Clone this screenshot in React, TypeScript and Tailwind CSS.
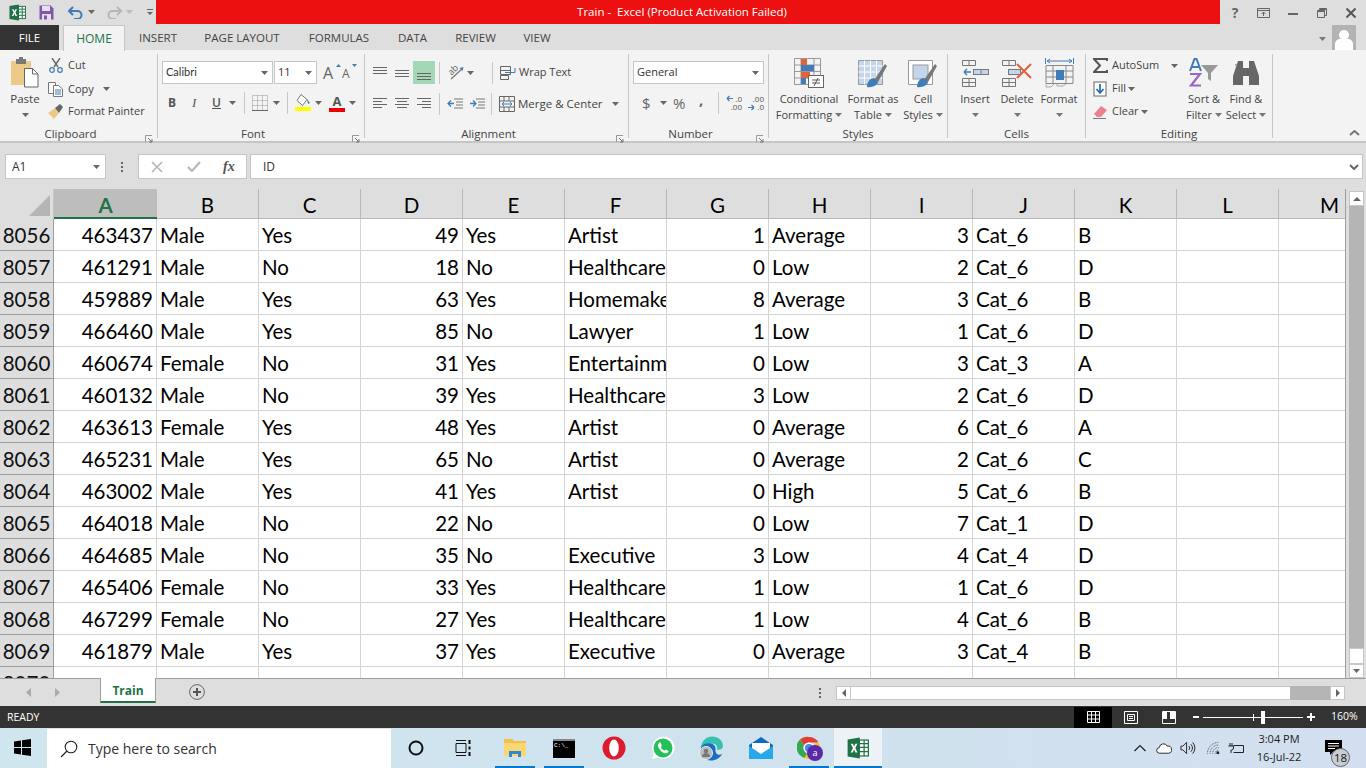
import React from "react";

const SEGOE = "[font-family:'Open_Sans','Noto_Sans',sans-serif]";

const rows: (string | number)[][] = [
  [8056, 463437, "Male", "Yes", 49, "Yes", "Artist", 1, "Average", 3, "Cat_6", "B"],
  [8057, 461291, "Male", "No", 18, "No", "Healthcare", 0, "Low", 2, "Cat_6", "D"],
  [8058, 459889, "Male", "Yes", 63, "Yes", "Homemaker", 8, "Average", 3, "Cat_6", "B"],
  [8059, 466460, "Male", "Yes", 85, "No", "Lawyer", 1, "Low", 1, "Cat_6", "D"],
  [8060, 460674, "Female", "No", 31, "Yes", "Entertainment", 0, "Low", 3, "Cat_3", "A"],
  [8061, 460132, "Male", "No", 39, "Yes", "Healthcare", 3, "Low", 2, "Cat_6", "D"],
  [8062, 463613, "Female", "Yes", 48, "Yes", "Artist", 0, "Average", 6, "Cat_6", "A"],
  [8063, 465231, "Male", "Yes", 65, "No", "Artist", 0, "Average", 2, "Cat_6", "C"],
  [8064, 463002, "Male", "Yes", 41, "Yes", "Artist", 0, "High", 5, "Cat_6", "B"],
  [8065, 464018, "Male", "No", 22, "No", "", 0, "Low", 7, "Cat_1", "D"],
  [8066, 464685, "Male", "No", 35, "No", "Executive", 3, "Low", 4, "Cat_4", "D"],
  [8067, 465406, "Female", "No", 33, "Yes", "Healthcare", 1, "Low", 1, "Cat_6", "D"],
  [8068, 467299, "Female", "No", 27, "Yes", "Healthcare", 1, "Low", 4, "Cat_6", "B"],
  [8069, 461879, "Male", "Yes", 37, "Yes", "Executive", 0, "Average", 3, "Cat_4", "B"],
];

const COLS = "A B C D E F G H I J K L M".split(" ");
const GRID = "grid grid-cols-[54px_103px_repeat(12,102px)]";

const Caret = ({ c = "#666" }: { c?: string }) => (
  <svg width="7" height="4" viewBox="0 0 7 4" className="shrink-0"><path d="M0 0h7L3.500 4z" fill={c} /></svg>
);

const Sep = () => <div className="w-px h-[22px] bg-[#c6c6c6] shrink-0" />;

const Expander = () => (
  <svg width="8" height="8" viewBox="0 0 8 8" className="absolute right-[4px] bottom-[-1px]">
    <path d="M0.500 7V0.500H7" fill="none" stroke="#999" />
    <path d="M3 3l4 4M7 4v3H4" fill="none" stroke="#777" />
  </svg>
);

const Group = ({ w, label, children, exp = true }: { w: string; label: string; children: React.ReactNode; exp?: boolean }) => (
  <div className={`${w} h-[84px] shrink-0 flex flex-col border-r border-[#c6c6c6] relative`}>
    <div className="flex-1 min-h-0">{children}</div>
    <div className={`h-[16px] mb-[-4px] leading-[16px] text-center text-[11.5px] text-[#444] relative ${exp ? "pr-[16px]" : ""}`}>
      {label}
      {exp && <Expander />}
    </div>
  </div>
);

const Lines = ({ ys, xs }: { ys: number[]; xs: [number, number][] }) => (
  <svg width="15" height="16" viewBox="0 0 15 16">
    {ys.map((y, i) => (
      <rect key={i} x={xs[i][0]} y={y} width={xs[i][1]} height="1" fill="#666" />
    ))}
  </svg>
);

const Large = ({ w, icon, lines, caretLine = true }: { w: string; icon: React.ReactNode; lines: string[]; caretLine?: boolean }) => (
  <div className={`${w} flex flex-col items-center shrink-0`}>
    <div className="h-[35px] flex items-center justify-center">{icon}</div>
    <div className="text-[11px] leading-[16px] text-[#444] whitespace-nowrap mt-[1px] text-center">
      <div>{lines[0]}</div>
      <div className="flex items-center justify-center gap-[3px] h-[16px]">
        {lines[1]}
        {caretLine && <Caret c="#777" />}
      </div>
    </div>
  </div>
);

const ExcelLogo = ({ s = 18 }: { s?: number }) => (
  <svg width={s} height={s} viewBox="0 0 18 18">
    <rect x="6" y="2.500" width="11.500" height="13" fill="#fff" stroke="#1f7246" />
    <path d="M10 2.500v13M14 2.500v13M6 5.500h11.500M6 8.500h11.500M6 12h11.500" stroke="#1f7246" />
    <path d="M0.500 2L10.500 0.500V17.500L0.500 16Z" fill="#1f7246" />
    <path d="M3 5.500h1.800l1 2.200 1-2.200h1.700L6.800 9l1.800 3.600H6.900L5.800 10.200 4.700 12.600H3L4.900 9Z" fill="#fff" />
  </svg>
);

const GridCell = ({ v, right }: { v: string | number; right: boolean }) => (
  <div className={`h-[32px] bg-white border-r border-b border-[#d4d4d4] overflow-hidden whitespace-nowrap leading-[32px] ${right ? "text-right pr-[3px]" : "text-left pl-[3px]"}`}>
    {v}
  </div>
);

const DecimalIcon = ({ more }: { more: boolean }) => (
  <div className="relative w-[16px] h-[16px] shrink-0 flex flex-col items-end text-[8px] leading-[8px] text-[#555]">
    <span>{more ? ".00" : ".0"}</span>
    <span>{more ? ".0" : ".00"}</span>
    <svg width="7" height="7" viewBox="0 0 7 7" className={`absolute left-0 ${more ? "top-[9px]" : "top-0"}`}>
      <path d={more ? "M0 3.500h6M6 3.500L3.500 1M6 3.500L3.500 6" : "M7 3.500H1M1 3.500L3.500 1M1 3.500L3.500 6"} fill="none" stroke="#3f7cb8" strokeWidth="1.200" />
    </svg>
  </div>
);

function Ribbon() {
  return (
    <div className={`h-[93px] shrink-0 bg-[#f3f3f3] border-b-2 border-[#c6c6c6] flex pt-[4px] ${SEGOE}`}>
      <Group w="w-[158px]" label="Clipboard">
        <div className="flex h-full">
          <div className="w-[50px] mr-[-2px] flex flex-col items-center pt-[3px] shrink-0">
            <svg width="30" height="32" viewBox="0 0 30 32">
              <rect x="1" y="4" width="20" height="24" fill="#edc987" />
              <rect x="6" y="2" width="10" height="5" fill="#777" />
              <rect x="9" y="0" width="4" height="3" fill="#777" />
              <path d="M14.500 11.500h8l5.500 5.500v13h-13.500z" fill="#fff" stroke="#666" />
              <path d="M22.500 11.500v5.500h5.500" fill="none" stroke="#666" />
            </svg>
            <div className="text-[11.5px] text-[#444] leading-[16px] mt-[2px]">Paste</div>
            <div className="mt-[6px]"><Caret /></div>
          </div>
          <div className="flex flex-col text-[11px] text-[#444] pt-[3px]">
            <div className="flex items-center gap-[4px] h-[17px] whitespace-nowrap">
              <svg width="16" height="15" viewBox="0 0 16 15">
                <path d="M4 0l6 9M12 0L6 9" stroke="#666" strokeWidth="1.400" fill="none" />
                <circle cx="4" cy="12" r="2.300" fill="none" stroke="#3f7cb8" strokeWidth="1.200" />
                <circle cx="12" cy="12" r="2.300" fill="none" stroke="#3f7cb8" strokeWidth="1.200" />
              </svg>
              Cut
            </div>
            <div className="flex items-center gap-[4px] h-[18px] mt-[6px] whitespace-nowrap">
              <svg width="16" height="15" viewBox="0 0 16 15">
                <path d="M.5.5h7v11h-7z" fill="#fff" stroke="#777" />
                <path d="M5.500 3.500h5l4 3.500v7.500h-9z" fill="#fff" stroke="#777" />
                <path d="M7 8h6M7 10h6M7 12h6" stroke="#3f7cb8" />
              </svg>
              Copy
              <span className="ml-[5px]"><Caret /></span>
            </div>
            <div className="flex items-center gap-[4px] h-[18px] mt-[4px] whitespace-nowrap">
              <svg width="16" height="15" viewBox="0 0 16 15">
                <path d="M0 9l7-5 4 5-5 6z" fill="#edc987" />
                <path d="M7 4l5-4 3 3-4 6z" fill="#666" />
              </svg>
              Format Painter
            </div>
          </div>
        </div>
      </Group>

      <Group w="w-[207px]" label="Font">
        <div className="pt-[7px] pl-[4px]">
          <div className="flex h-[23px] items-stretch">
            <div className="w-[111px] bg-white border border-[#c6c6c6] flex items-center justify-between pl-[3px] pr-[4px] text-[11px] text-[#333] [font-family:'Lato',sans-serif]">
              Calibri <Caret />
            </div>
            <div className="w-[43px] ml-[1px] bg-white border border-[#c6c6c6] flex items-center justify-between pl-[3px] pr-[4px] text-[11px] text-[#333]">
              11 <Caret />
            </div>
            <div className="flex items-center ml-[6px] gap-[5px] text-[#666]">
              <div className="relative text-[16px] leading-none w-[14px]">A<svg width="5" height="3" className="absolute right-[-4px] top-[-1px]"><path d="M0 3h5L2.500 0z" fill="#3f7cb8" /></svg></div>
              <div className="relative text-[12px] leading-none w-[14px] pt-[3px]">A<svg width="5" height="3" className="absolute right-[-1px] top-[-1px]"><path d="M0 0h5L2.500 3z" fill="#3f7cb8" /></svg></div>
            </div>
          </div>
          <div className="flex items-center h-[22px] mt-[8px] text-[#555] pl-[6px]">
            <span className="w-[24px] font-bold text-[12px]">B</span>
            <span className="w-[20px] italic text-[13px] [font-family:'Liberation_Serif',serif]">I</span>
            <span className="w-[17px] underline font-semibold text-[12px]">U</span>
            <Caret />
            <span className="w-[8px]" />
            <Sep />
            <span className="w-[7px]" />
            <svg width="16" height="16" viewBox="0 0 16 16" className="mr-[5px]">
              <path d="M.5.5h15v15H.5zM5.500.5v15M10.500.5v15M.5 5.500h15M.5 10.500h15" fill="none" stroke="#999" strokeDasharray="1 1" />
              <path d="M0 15.500h16" stroke="#666" />
            </svg>
            <Caret />
            <span className="w-[7px]" />
            <Sep />
            <span className="w-[7px]" />
            <svg width="16" height="18" viewBox="0 0 16 18" className="mr-[4px]">
              <path d="M6 0.500l6 5-4.500 6-5.500-5z" fill="#fff" stroke="#777" />
              <path d="M12 5l3 4-2 1z" fill="#3f7cb8" />
              <rect x="0" y="13" width="16" height="4" fill="#ffff00" />
            </svg>
            <Caret />
            <span className="w-[7px]" />
            <div className="relative w-[16px] h-[18px] flex flex-col items-center mr-[4px]">
              <span className="text-[13px] font-bold leading-[14px] text-[#555]">A</span>
              <span className="w-[16px] h-[4px] bg-[#f00000]" />
            </div>
            <Caret />
          </div>
        </div>
      </Group>

      <Group w="w-[264px]" label="Alignment">
        <div className="pt-[7px] pl-[8px]">
          <div className="flex h-[23px] items-center">
            <div className="w-[22px]"><Lines ys={[2, 5, 8]} xs={[[0, 14], [0, 14], [0, 14]]} /></div>
            <div className="w-[18px]"><Lines ys={[5, 8, 11]} xs={[[0, 14], [0, 14], [0, 14]]} /></div>
            <div className="w-[22px] h-[23px] bg-[#a3d7b6] flex items-center justify-center"><Lines ys={[8, 11, 14]} xs={[[0, 14], [0, 14], [0, 14]]} /></div>
            <span className="w-[4px]" />
            <Sep />
            <span className="w-[7px]" />
            <div className="relative w-[17px] h-[18px] mr-[3px] shrink-0">
              <span className="block w-[12px] h-[12px] -rotate-45 text-[9px] leading-[12px] text-center text-[#666]">ab</span>
              <svg width="17" height="18" viewBox="0 0 17 18" className="absolute left-0 top-0">
                <path d="M4 15L15 5" fill="none" stroke="#777" strokeWidth="1.200" />
                <path d="M12.500 4l4-1-1 4z" fill="#3f7cb8" />
              </svg>
            </div>
            <Caret />
            <span className="w-[18px]" />
            <Sep />
            <span className="w-[7px]" />
            <svg width="16" height="16" viewBox="0 0 16 16" className="mr-[3px]">
              <path d="M.5 1.500h10v4H.5zM.5 5.500h10v4H.5zM.5 10.500h8v4H.5z" fill="none" stroke="#666" />
              <path d="M5 7.500h10M15 3v4.500H8" fill="none" stroke="#3f7cb8" />
            </svg>
            <span className="text-[11px] text-[#444] whitespace-nowrap">Wrap Text</span>
          </div>
          <div className="flex h-[22px] mt-[9px] items-center">
            <div className="w-[22px]"><Lines ys={[2, 5, 8, 11]} xs={[[0, 14], [0, 9], [0, 14], [0, 9]]} /></div>
            <div className="w-[22px]"><Lines ys={[2, 5, 8, 11]} xs={[[0, 14], [2, 10], [0, 14], [2, 10]]} /></div>
            <div className="w-[18px]"><Lines ys={[2, 5, 8, 11]} xs={[[0, 14], [5, 9], [0, 14], [5, 9]]} /></div>
            <span className="w-[4px]" />
            <Sep />
            <span className="w-[7px]" />
            <svg width="16" height="12" viewBox="0 0 16 12" className="mr-[6px]">
              <path d="M7 1h9M9 4h7M9 7h7M7 10h9" stroke="#777" />
              <path d="M7 5.500H1M4 2.500l-3 3 3 3" fill="none" stroke="#3f7cb8" strokeWidth="1.300" />
            </svg>
            <svg width="16" height="12" viewBox="0 0 16 12">
              <path d="M7 1h9M9 4h7M9 7h7M7 10h9" stroke="#777" />
              <path d="M1 5.500h6M4 2.500l3 3-3 3" fill="none" stroke="#3f7cb8" strokeWidth="1.300" />
            </svg>
            <span className="w-[6px]" />
            <Sep />
            <span className="w-[7px]" />
            <svg width="16" height="16" viewBox="0 0 16 16" className="mr-[3px]">
              <path d="M.5.5h15v15H.5zM.5 5h15M.5 11h15M5 .5V5M10 .5V5M5 11v4.500M10 11v4.500" fill="none" stroke="#666" />
              <path d="M3 8h10M3 8l2-2M3 8l2 2M13 8l-2-2M13 8l-2 2" fill="none" stroke="#3f7cb8" />
            </svg>
            <span className="text-[11.5px] text-[#444] whitespace-nowrap w-[94px]">Merge &amp; Center</span>
            <Caret />
          </div>
        </div>
      </Group>

      <Group w="w-[140px]" label="Number">
        <div className="pt-[7px] pl-[4px]">
          <div className="w-[131px] h-[23px] bg-white border border-[#c6c6c6] flex items-center justify-between pl-[3px] pr-[4px] text-[11px] text-[#333]">
            General <Caret />
          </div>
          <div className="flex h-[22px] mt-[8px] items-center text-[#666] pl-[9px]">
            <span className="w-[18px] text-[15px] leading-none">$</span>
            <Caret />
            <span className="w-[6px]" />
            <span className="w-[20px] text-[15px] leading-none">%</span>
            <span className="w-[6px]" />
            <span className="w-[12px] text-[15px] leading-none font-bold mt-[-8px]">,</span>
            <span className="w-[7px]" />
            <Sep />
            <span className="w-[7px]" />
            <span className="mr-[6px]"><DecimalIcon more={false} /></span>
            <DecimalIcon more={true} />
          </div>
        </div>
      </Group>

      <Group w="w-[179px]" label="Styles" exp={false}>
        <div className="flex pt-[1px] pl-[4px]">
          <Large w="w-[72px]" lines={["Conditional", "Formatting"]} icon={
            <svg width="30" height="30" viewBox="0 0 30 30">
              <path d="M.5.5h26v26H.5zM.5 7h26M.5 13.500h26M.5 20h26M7 .5v26M20 .5v26" fill="none" stroke="#999" />
              <rect x="7" y="1" width="6" height="6" fill="#e0633b" />
              <rect x="7" y="7" width="13" height="6" fill="#3f7cb8" />
              <rect x="7" y="14" width="9" height="6" fill="#e0633b" />
              <rect x="7" y="20" width="5" height="6" fill="#3f7cb8" />
              <rect x="14.500" y="17.500" width="15" height="12" fill="#fff" stroke="#666" />
              <path d="M18 22h8M18 25h8M20 28l4-8" stroke="#555" />
            </svg>
          } />
          <Large w="w-[56px]" lines={["Format as", "Table"]} icon={
            <svg width="30" height="30" viewBox="0 0 30 30">
              <path d="M.5 2.500h24v24H.5z" fill="#c5d6ea" stroke="#999" />
              <path d="M.5 8h24M.5 14h24M.5 20h24M6.500 2.500v24M12.500 2.500v24M18.500 2.500v24" stroke="#fff" />
              <path d="M16 22L27 6l2 2-9 16z" fill="#777" />
              <path d="M9 29c0-5 3-9 7-9l4 4c0 3-6 6-11 5z" fill="#3f7cb8" />
            </svg>
          } />
          <Large w="w-[44px]" lines={["Cell", "Styles"]} icon={
            <svg width="30" height="30" viewBox="0 0 30 30">
              <path d="M.5 2.500h24v24H.5z" fill="#fff" stroke="#999" />
              <rect x="5" y="7" width="15" height="14" fill="#c5d6ea" stroke="#999" />
              <path d="M16 22L27 6l2 2-9 16z" fill="#777" />
              <path d="M9 29c0-5 3-9 7-9l4 4c0 3-6 6-11 5z" fill="#3f7cb8" />
            </svg>
          } />
        </div>
      </Group>

      <Group w="w-[138px]" label="Cells" exp={false}>
        <div className="flex pt-[1px] pl-[6px]">
          {[
            ["Insert", (
              <svg width="27" height="28" viewBox="0 0 27 28">
                <path d="M.5 1.500h13v5H.5zM7 1.500v5M.5 19.500h13v8H.5zM7 19.500v8M.5 23.500h13" fill="none" stroke="#777" />
                <rect x="11.500" y="10.500" width="15" height="5" fill="#c5d6ea" stroke="#777" />
                <path d="M19 10.500v5" stroke="#777" />
                <path d="M2 13h7M2 13l3-3M2 13l3 3" fill="none" stroke="#3f7cb8" strokeWidth="1.400" />
              </svg>
            )],
            ["Delete", (
              <svg width="31" height="28" viewBox="0 0 31 28">
                <path d="M.5 1.500h13v5H.5zM7 1.500v5M.5 19.500h13v8H.5zM7 19.500v8M.5 23.500h13" fill="none" stroke="#777" />
                <rect x="6.500" y="10.500" width="12" height="5" fill="#c5d6ea" stroke="#777" />
                <path d="M15 5l14 14M29 5L15 19" stroke="#e0633b" strokeWidth="2" />
              </svg>
            )],
            ["Format", (
              <svg width="29" height="32" viewBox="0 0 29 32">
                <path d="M.5 1v6M28.500 1v6M2 4h25M2 4l3-2M2 4l3 2M27 4l-3-2M27 4l-3 2" fill="none" stroke="#3f7cb8" />
                <path d="M1 8.500h27v18H1zM1 14h27M1 20h27M8 8.500v18M21 8.500v18" fill="none" stroke="#888" />
                <rect x="11" y="13" width="8" height="10" fill="#3f7cb8" />
                <path d="M1 27v3h5l3-3M12 27v2h6l3-2" fill="none" stroke="#aaa" />
              </svg>
            )],
          ].map(([t, ic]) => (
            <div key={t as string} className="w-[42px] flex flex-col items-center shrink-0">
              <div className="h-[35px] flex items-center justify-center">{ic}</div>
              <div className="text-[11px] leading-[16px] text-[#444] mt-[1px]">{t}</div>
              <div className="h-[16px] flex items-center"><Caret c="#777" /></div>
            </div>
          ))}
        </div>
      </Group>

      <Group w="w-[187px]" label="Editing" exp={false}>
        <div className="flex pl-[7px] pt-[1px]">
          <div className="flex flex-col text-[11px] text-[#444] w-[90px] pt-[1px] shrink-0">
            <div className="flex items-center h-[19px]">
              <svg width="15" height="15" viewBox="0 0 15 15" className="mr-[4px]"><path d="M14 3V1H1l6 6.500L1 14h13v-2" fill="none" stroke="#555" strokeWidth="2" /></svg>
              <span className="w-[59px]">AutoSum</span><Caret />
            </div>
            <div className="flex items-center h-[19px] mt-[4px]">
              <svg width="14" height="16" viewBox="0 0 14 16" className="mr-[5px]">
                <rect x="1" y="1" width="12" height="14" fill="#fff" stroke="#666" />
                <path d="M7 3v9M3.500 8L7 12l3.500-4" fill="none" stroke="#2a6fb5" strokeWidth="1.800" />
              </svg>
              <span className="mr-[2px]">Fill</span><Caret />
            </div>
            <div className="flex items-center h-[19px] mt-[4px]">
              <svg width="15" height="14" viewBox="0 0 15 14" className="mr-[4px]">
                <path d="M1 9l7-8 6 4-6 7H4z" fill="#e9818f" />
                <path d="M0 13.500h13" stroke="#777" />
              </svg>
              <span className="mr-[2px]">Clear</span><Caret />
            </div>
          </div>
          <Large w="w-[42px]" lines={["Sort &", "Filter"]} icon={
            <svg width="32" height="30" viewBox="0 0 32 30">
              <path d="M2 13L6.500 1h2L13 13M4 9h7" fill="none" stroke="#3f7cb8" strokeWidth="2" />
              <path d="M2 16h10L3 27.500h10" fill="none" stroke="#9767c4" strokeWidth="2.200" />
              <path d="M13 7h17l-7 8v8l-3-2v-6z" fill="#999" />
            </svg>
          } />
          <Large w="w-[42px]" lines={["Find &", "Select"]} icon={
            <svg width="28" height="26" viewBox="0 0 28 26">
              <path d="M3 10l3-9h5v24H1V16zM25 10l-3-9h-5v24h10V16z" fill="#666" />
              <rect x="11" y="8" width="6" height="8" fill="#666" />
              <rect x="3" y="4" width="2" height="2" fill="#aaa" />
            </svg>
          } />
        </div>
      </Group>

      <div className="flex-1 flex items-end justify-end pr-[6px] pb-[5px]">
        <svg width="11" height="6" viewBox="0 0 11 6"><path d="M1 5l4.500-4L10 5" fill="none" stroke="#777" strokeWidth="2" /></svg>
      </div>
    </div>
  );
}

function Taskbar() {
  const Under = ({ w = "w-[40px]", on = true, children, bg = "" }: { w?: string; on?: boolean; children: React.ReactNode; bg?: string }) => (
    <div className={`${w} h-[40px] relative flex items-center justify-center shrink-0 ${bg}`}>
      {children}
      {on && <div className="absolute bottom-0 left-0 right-0 h-[2px] bg-[#0078d4]" />}
    </div>
  );
  return (
    <div className={`h-[40px] shrink-0 flex items-stretch bg-gradient-to-r from-[#cfe6ee] via-[#cfe3ee] to-[#d3dff0] ${SEGOE}`}>
      <div className="w-[47px] flex items-center justify-center shrink-0 pb-[1px] pr-[2px]">
        <svg width="17" height="17" viewBox="0 0 17 17"><path d="M0 2.400L7 1.400V8H0zM8 1.300L17 0V8H8zM0 9h7v6.600L0 14.600zM8 9h9v8L8 15.700z" fill="#000" /></svg>
      </div>
      <div className="w-[344px] bg-white flex items-center shrink-0 border-t border-[#e2e2e2]">
        <svg width="18" height="18" viewBox="0 0 18 18" className="ml-[13px]"><circle cx="11" cy="7" r="5.800" fill="none" stroke="#222" strokeWidth="1.100" /><path d="M7 11l-6 6" stroke="#222" strokeWidth="1.300" /></svg>
        <span className="ml-[10px] text-[14px] text-[#333] whitespace-nowrap">Type here to search</span>
      </div>
      <div className="w-[50px] flex items-center justify-center shrink-0">
        <svg width="16" height="16" viewBox="0 0 16 16"><circle cx="8" cy="8" r="6.500" fill="none" stroke="#111" strokeWidth="2" /></svg>
      </div>
      <div className="w-[43px] flex items-center justify-center shrink-0">
        <svg width="16" height="16" viewBox="0 0 16 16">
          <path d="M1 0.500h10M1 15.500h10M1 3.500h10v9H1z" fill="none" stroke="#111" />
          <path d="M14.500 0v4M14.500 6.500v3M14.500 12v4" stroke="#111" strokeWidth="2" />
        </svg>
      </div>
      <div className="w-[11px] shrink-0" />
      <div className="flex gap-[9px] shrink-0 w-[94px]">
        <Under>
          <svg width="22" height="20" viewBox="0 0 22 20">
            <path d="M0 1h8l2 2h12v15H0z" fill="#f0c14d" />
            <rect x="0" y="5" width="22" height="13" fill="#fbd672" />
            <path d="M5 19v-6h12v6h-3v-3H8v3z" fill="#2f8ad6" />
          </svg>
        </Under>
        <Under>
          <div className="w-[22px] h-[19px] bg-black border-t-2 border-[#888] text-white text-[6px] leading-[7px] font-mono whitespace-nowrap pl-[1px] pt-[1px] overflow-hidden">C:\_</div>
        </Under>
      </div>
      <div className="w-[49px] flex items-center justify-center shrink-0">
        <svg width="24" height="24" viewBox="0 0 24 24">
          <circle cx="12" cy="12" r="11.500" fill="#dd1b2d" />
          <ellipse cx="12" cy="12" rx="4.800" ry="8.500" fill="#fff" />
        </svg>
      </div>
      <div className="w-[49px] flex items-center justify-center shrink-0">
        <svg width="24" height="24" viewBox="0 0 24 24">
          <path d="M1 23l1.800-5.500A11.200 11.200 0 1 1 7 21.500z" fill="#fff" />
          <circle cx="12" cy="12" r="9.500" fill="#25c05a" />
          <path d="M8.500 6.500c-1.500 1-2 3 -1 5 1 2.300 3.500 5 6 5.700 2 .5 3.700-.5 4-2.200l-2.800-1.500-1.200 1.300c-1.500-.5-3-2.200-3.700-3.700l1-1.200L9.700 6.500z" fill="#fff" />
        </svg>
      </div>
      <div className="w-[49px] flex items-center justify-center shrink-0">
        <svg width="26" height="25" viewBox="0 0 26 25">
          <path d="M2 11C3 4 8 .5 13 .5c6 0 11 4 11 9.500 0 3-3 4.500-6 3.500 1-3-1-6-5-6-4 0-8 1-11 3.500z" fill="#35c0b0" />
          <path d="M2 11c2-3 6-4.500 10-3.500 3 .8 5 3 4.500 6C16 18 20 20 23 18c-2 4-6 6.500-11 6.500C5 24.500 1 18 2 11z" fill="#1a6fc0" />
          <circle cx="7" cy="17" r="6.500" fill="#bbb" stroke="#e3eef5" />
          <circle cx="7" cy="15" r="2.200" fill="#777" />
          <path d="M3 21c0-3 2-4 4-4s4 1 4 4z" fill="#777" />
        </svg>
      </div>
      <div className="w-[49px] flex items-center justify-center shrink-0">
        <svg width="24" height="22" viewBox="0 0 24 22">
          <path d="M0 8L12 0l12 8v14H0z" fill="#0c6cc4" />
          <path d="M3 6h18v8l-9 5-9-5z" fill="#fff" />
          <path d="M0 9l12 8 12-8v13H0z" fill="#27a8ea" />
        </svg>
      </div>
      <div className="w-[4px] shrink-0" />
      <Under w="w-[40px]">
        <div className="relative">
          <svg width="24" height="24" viewBox="0 0 24 24">
            <path d="M12 1a11 11 0 0 1 9.500 5.500H12a5.500 5.500 0 0 0-5 3L3 3.500A11 11 0 0 1 12 1z" fill="#e33b2e" />
            <path d="M3 3.500l4 6a5.500 5.500 0 0 0 3.500 7.500L7.500 22A11 11 0 0 1 3 3.500z" fill="#36a852" />
            <path d="M21.500 6.500a11 11 0 0 1-9.500 16.500l-4.500-1 3-5a5.500 5.500 0 0 0 6-9z" fill="#fbc117" />
            <circle cx="12" cy="12" r="4.800" fill="#4a89f3" stroke="#fff" strokeWidth="1.500" />
          </svg>
          <div className="absolute left-[10px] top-[9px] w-[16px] h-[16px] rounded-full bg-[#5b2aa7] text-white text-[9px] leading-[15px] text-center">a</div>
        </div>
      </Under>
      <div className="w-[5px] shrink-0" />
      <Under w="w-[48px]" bg="bg-[#edf2f7]">
        <ExcelLogo s={22} />
      </Under>
      <div className="flex-1" />
      <div className="flex items-center shrink-0 text-[#222]">
        <svg width="12" height="8" viewBox="0 0 12 8" className="mr-[10px]"><path d="M.5 7L6 1.500 11.500 7" fill="none" stroke="#222" strokeWidth="1.200" /></svg>
        <svg width="16" height="11" viewBox="0 0 17 11" className="mr-[8px]"><path d="M4 10.500a3 3 0 0 1-.5-6A4.500 4.500 0 0 1 12 3a3.500 3.500 0 0 1 1.500 7.500z" fill="#fff" stroke="#222" /></svg>
        <svg width="16" height="14" viewBox="0 0 17 14" className="mr-[11px]">
          <path d="M1 5h2l4-4v12l-4-4H1z" fill="none" stroke="#222" />
          <path d="M9.500 5a3 3 0 0 1 0 4M11.500 3a6 6 0 0 1 0 8M13.500 1a9 9 0 0 1 0 12" fill="none" stroke="#222" />
        </svg>
        <svg width="13" height="14" viewBox="0 0 15 14" className="mr-[8px]">
          <path d="M.5 13.500a13 13 0 0 1 13-13M3.500 13.500a10 10 0 0 1 10-10M6.500 13.500a7 7 0 0 1 7-7M9.500 13.500a4 4 0 0 1 4-4" fill="none" stroke="#333" strokeDasharray="1 1" />
          <rect x="11" y="11" width="3" height="3" fill="#222" />
        </svg>
        <svg width="16" height="11" viewBox="0 0 16 11" className="mr-[10px]">
          <path d="M5.500 2.500h10v7h-10M2 0v3M4 0v3M.5 3h5v2a2 2 0 0 1-2 2H3v3" fill="none" stroke="#222" />
        </svg>
        <div className="w-[50px] text-[11px] leading-[18px] text-center text-[#222] whitespace-nowrap">
          <div>3:04 PM</div>
          <div>16-Jul-22</div>
        </div>
        <div className="w-[19px]" />
        <div className="relative w-[30px] h-[40px] mr-[13px]">
          <svg width="17" height="16" viewBox="0 0 17 16" className="absolute left-[2px] top-[12px]">
            <path d="M0 0h17v12H8l-3 3v-3H0z" fill="#000" />
            <path d="M3 3.500h11M3 6h11M3 8.500h7" stroke="#fff" />
          </svg>
          <div className="absolute left-[8px] top-[20px] w-[19px] h-[19px] rounded-full bg-[#c8cdd4] border border-[#666] text-[11.5px] leading-[17px] text-center text-[#111]">18</div>
        </div>
      </div>
    </div>
  );
}

export default function App() {
  return (
    <div className={`w-[1366px] h-[768px] flex flex-col overflow-hidden bg-[#dedede] ${SEGOE}`}>
      {/* Title bar */}
      <div className="h-[25px] shrink-0 flex bg-[#dedede]">
        <div className="w-[156px] flex items-center shrink-0 pb-[1px]">
          <span className="ml-[9px]"><ExcelLogo s={17} /></span>
          <svg width="15" height="15" viewBox="0 0 15 15" className="ml-[13px]">
            <path d="M.5.5h11l3 3v11H.5z" fill="#7e57a8" />
            <rect x="3" y="1" width="8" height="5" fill="#e6ddf0" />
            <rect x="3" y="9" width="9" height="6" fill="#e6ddf0" />
            <rect x="5" y="10.500" width="3" height="4" fill="#7e57a8" />
          </svg>
          <svg width="15" height="13" viewBox="0 0 15 13" className="ml-[14px]">
            <path d="M1 5h8.500a4 4 0 0 1 0 8H6M5 1L1 5l4 4" fill="none" stroke="#3d7cb8" strokeWidth="2" />
          </svg>
          <span className="ml-[5px]"><Caret /></span>
          <svg width="15" height="13" viewBox="0 0 15 13" className="ml-[12px]">
            <path d="M14 5H5.500a4 4 0 0 0 0 8H9M10 1l4 4-4 4" fill="none" stroke="#b6b6b6" strokeWidth="2" />
          </svg>
          <span className="ml-[4px]"><Caret c="#bbb" /></span>
          <svg width="6" height="6" viewBox="0 0 6 6" className="ml-[14px]"><path d="M0 .5h6" stroke="#666" /><path d="M0 3h6L3 6z" fill="#666" /></svg>
        </div>
        <div className="w-[1064px] h-[24px] bg-[#ec1010] text-white text-[11.5px] flex items-center justify-center pr-[12px] whitespace-pre shrink-0">
          Train -  Excel (Product Activation Failed)
        </div>
        <div className="flex-1 flex items-center text-[#666]">
          <span className="w-[14px] ml-[8px] text-[14px] font-bold leading-none text-center">?</span>
          <svg width="13" height="10" viewBox="0 0 13 10" className="ml-[15px]"><path d="M.5.5h12v9H.5zM.5 2.500h12M6.500 8V4M4.500 6l2-2 2 2" fill="none" stroke="#666" /></svg>
          <svg width="10" height="2" viewBox="0 0 10 2" className="ml-[18px] mt-[2px]"><rect width="10" height="2" fill="#666" /></svg>
          <svg width="10" height="10" viewBox="0 0 10 10" className="ml-[19px]"><path d="M.5 2.500h7v7h-7zM2.500 2.500v-2h7v7h-2M.5 3.500h7M2.500 1.500h7" fill="none" stroke="#666" /></svg>
          <svg width="10" height="10" viewBox="0 0 10 10" className="ml-[19px]"><path d="M.5.5l9 9M9.500.5l-9 9" stroke="#555" strokeWidth="2" /></svg>
        </div>
      </div>

      {/* Tabs */}
      <div className="h-[25px] shrink-0 flex text-[12px] text-[#444] relative">
        <div className="w-[59px] h-[25px] bg-[#333] text-white text-[11.5px] flex items-center justify-center shrink-0">FILE</div>
        <div className="w-[4px] shrink-0" />
        <div className="w-[62px] h-[26px] bg-[#f3f3f3] border-x border-t border-[#c6c6c6] text-[#20744a] flex items-center justify-center shrink-0 relative z-10">HOME</div>
        <div className="flex items-center h-[25px] text-[11.5px] whitespace-nowrap">
          <span className="w-[66px] text-center">INSERT</span>
          <span className="w-[102px] text-center">PAGE LAYOUT</span>
          <span className="w-[92px] text-center">FORMULAS</span>
          <span className="w-[55px] text-center">DATA</span>
          <span className="w-[71px] text-center">REVIEW</span>
          <span className="w-[52px] text-center">VIEW</span>
        </div>
        <div className="flex-1 flex justify-end items-end">
          <span className="mb-[9px] mr-[6px]"><Caret c="#777" /></span>
          <div className="w-[24px] h-[25px] mr-[10px] bg-[#b3b3b3] flex flex-col items-center justify-end overflow-hidden">
            <span className="w-[10px] h-[10px] rounded-full bg-white mb-[-1px]" />
            <span className="w-[18px] h-[11px] rounded-t-[5px] bg-white" />
          </div>
        </div>
      </div>

      <Ribbon />

      {/* Formula bar */}
      <div className="h-[46px] shrink-0 flex items-start pt-[11px] pl-[5px] bg-[#dedede]">
        <div className="w-[101px] h-[25px] bg-white border border-[#c6c6c6] flex items-center justify-between pl-[6px] pr-[5px] text-[12px] text-[#333] shrink-0">
          A1 <Caret />
        </div>
        <div className="w-[32px] h-[25px] flex flex-col items-center justify-center gap-[2px] shrink-0">
          <span className="w-[2px] h-[2px] bg-[#666]" />
          <span className="w-[2px] h-[2px] bg-[#666]" />
          <span className="w-[2px] h-[2px] bg-[#666]" />
        </div>
        <div className="w-[109px] h-[25px] bg-white border border-[#c6c6c6] flex items-center shrink-0">
          <svg width="12" height="12" viewBox="0 0 12 12" className="ml-[12px]"><path d="M1 1l10 10M11 1L1 11" stroke="#b5b5b5" strokeWidth="1.600" /></svg>
          <svg width="14" height="11" viewBox="0 0 14 11" className="ml-[24px]"><path d="M1 6l4 4 8-9" fill="none" stroke="#b5b5b5" strokeWidth="2" /></svg>
          <span className="ml-[22px] text-[14px] italic font-bold text-[#555] [font-family:'Liberation_Serif',serif]">fx</span>
        </div>
        <div className="w-[3px] shrink-0" />
        <div className="w-[1113px] h-[25px] bg-white border border-[#c6c6c6] flex items-center justify-between pl-[12px] pr-[3px] text-[12px] text-[#333] shrink-0">
          ID
          <svg width="10" height="6" viewBox="0 0 10 6"><path d="M1 1l4 4 4-4" fill="none" stroke="#666" strokeWidth="2" /></svg>
        </div>
      </div>

      {/* Sheet */}
      <div className="h-[489px] shrink-0 flex overflow-hidden">
        <div className="w-[1345px] shrink-0 overflow-hidden [font-family:'Lato',sans-serif] text-[20.5px] text-black">
          <div className={`${GRID} h-[30px]`}>
            <div className="flex items-end justify-end pr-[3px] pb-[3px] border-r border-[#c6c6c6]">
              <svg width="21" height="21" viewBox="0 0 21 21"><path d="M21 0v21H0z" fill="#b5b5b5" /></svg>
            </div>
            {COLS.map((c, i) => (
              <div key={c} className={`text-center leading-[32px] overflow-hidden ${i === 0 ? "bg-[#bdbdbd] text-[#217346] font-bold border-b-2 border-[#217346]" : "border-r border-b border-[#9e9e9e]/60"}`}>
                {c}
              </div>
            ))}
          </div>
          {[...rows, [8070, "", "", "", "", "", "", "", "", "", "", ""]].map((r) => (
            <div key={r[0]} className={GRID}>
              <div className="h-[32px] bg-[#dedede] border-r border-b border-[#9e9e9e] leading-[32px] text-center text-[#111]">{r[0]}</div>
              {[...r.slice(1), "", ""].map((v, i) => (
                <GridCell key={i} v={v} right={typeof v === "number"} />
              ))}
            </div>
          ))}
        </div>
        <div className="w-[21px] shrink-0 flex flex-col pt-[2px] pl-[3px] bg-[#dedede] border-l border-[#9e9e9e]">
          <div className="w-[15px] h-[15px] bg-white border border-[#c6c6c6] flex items-center justify-center"><svg width="8" height="4" viewBox="0 0 8 4"><path d="M0 4h8L4 0z" fill="#666" /></svg></div>
          <div className="w-[15px] h-[442px] bg-[#b5b5b5]" />
          <div className="w-[15px] h-[16px] bg-white border border-[#c6c6c6]" />
          <div className="w-[15px] h-[14px] bg-white border border-[#c6c6c6] flex items-center justify-center"><Caret /></div>
        </div>
      </div>

      {/* Sheet tabs */}
      <div className="h-[28px] shrink-0 flex items-start bg-[#dedede] border-t border-[#9e9e9e] relative z-10">
        <div className="w-[100px] h-[26px] flex items-center shrink-0">
          <svg width="5" height="9" viewBox="0 0 5 9" className="ml-[26px]"><path d="M5 0v9L0 4.500z" fill="#aaa" /></svg>
          <svg width="5" height="9" viewBox="0 0 5 9" className="ml-[24px]"><path d="M0 0v9l5-4.500z" fill="#aaa" /></svg>
        </div>
        <div className="w-[56px] h-[25px] pt-[2px] bg-white border-x border-[#9e9e9e] border-b-2 border-b-[#217346] text-[#217346] font-bold text-[12px] flex items-center justify-center shrink-0 -mt-px">Train</div>
        <div className="w-[82px] h-[26px] flex items-center pl-[33px] shrink-0">
          <svg width="16" height="16" viewBox="0 0 16 16"><circle cx="8" cy="8" r="7.400" fill="none" stroke="#666" /><path d="M4 8h8M8 4v8" stroke="#555" strokeWidth="2" /></svg>
        </div>
        <div className="w-[582px] h-[26px] shrink-0" />
        <div className="flex flex-col gap-[2px] mt-[9px] ml-[-1px] shrink-0">
          <span className="w-[2px] h-[2px] bg-[#666]" />
          <span className="w-[2px] h-[2px] bg-[#666]" />
          <span className="w-[2px] h-[2px] bg-[#666]" />
        </div>
        <div className="ml-[15px] mt-[7px] flex h-[14px] items-stretch shrink-0 w-[509px]">
          <div className="w-[15px] bg-white border border-[#c6c6c6] flex items-center justify-center"><svg width="4" height="8" viewBox="0 0 4 8"><path d="M4 0v8L0 4z" fill="#666" /></svg></div>
          <div className="w-[439px] bg-white border-y border-[#c6c6c6]" />
          <div className="w-[40px] bg-[#b5b5b5]" />
          <div className="w-[15px] bg-white border border-[#c6c6c6] flex items-center justify-center"><svg width="4" height="8" viewBox="0 0 4 8"><path d="M0 0v8l4-4z" fill="#666" /></svg></div>
        </div>
      </div>

      {/* Status bar */}
      <div className="h-[22px] shrink-0 bg-[#333] text-white flex items-center text-[10.5px]">
        <span className="ml-[7px] w-[1067px] shrink-0 pt-[1px]">READY</span>
        <div className="w-[38px] h-[21px] bg-black flex items-center justify-center shrink-0">
          <svg width="13" height="12" viewBox="0 0 13 12"><path d="M.5.5h12v11H.5zM4.500.5v11M8.500.5v11M.5 4h12M.5 8h12" fill="none" stroke="#fff" /></svg>
        </div>
        <div className="w-[38px] flex justify-center shrink-0">
          <svg width="14" height="13" viewBox="0 0 14 13"><path d="M.5.5h13v12H.5z M3.500 3.500h7v6h-7zM5 5.500h4M5 7.500h4" fill="none" stroke="#fff" /></svg>
        </div>
        <div className="w-[38px] flex justify-center shrink-0">
          <svg width="14" height="13" viewBox="0 0 14 13"><path d="M.5.5h13v12H.5z" fill="none" stroke="#fff" /><path d="M1 1h4v7H1zM8 1h5v7H8z" fill="#fff" /></svg>
        </div>
        <span className="w-[5px] shrink-0" />
        <span className="w-[6px] h-[2px] bg-white shrink-0" />
        <div className="w-[100px] ml-[4px] h-[1px] bg-white relative shrink-0">
          <span className="absolute left-[50px] top-[-3px] w-[1px] h-[7px] bg-white" />
          <span className="absolute left-[58px] top-[-6px] w-[4px] h-[13px] bg-white" />
        </div>
        <svg width="8" height="8" viewBox="0 0 8 8" className="ml-[4px]"><path d="M0 4h8M4 0v8" stroke="#fff" strokeWidth="2" /></svg>
        <span className="ml-[16px] whitespace-nowrap">160%</span>
      </div>

      <Taskbar />
    </div>
  );
}
